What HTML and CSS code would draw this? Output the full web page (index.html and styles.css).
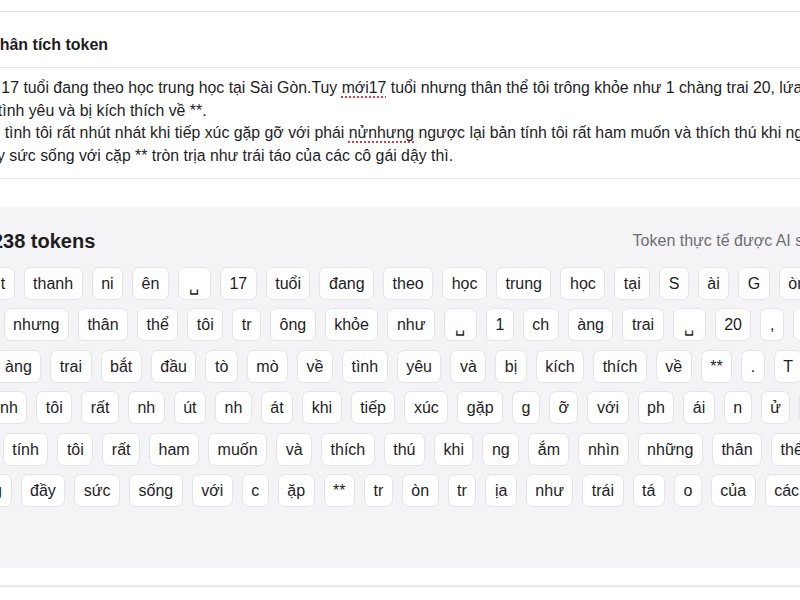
FILE: index.html
```html
<!DOCTYPE html>
<html lang="vi">
<head>
  <meta charset="UTF-8">
  <title>Phân tích token</title>
  <meta name="viewport" content="width=device-width, initial-scale=1.0">
  <link rel="stylesheet" href="styles.css">
</head>
<body>

<main class="page">
  <section class="card">
    <header class="card-head">
      <h2>Phân tích token</h2>
    </header>
    <div class="source">
      <p>Tôi là một thanh niên 17 tuổi đang theo học trung học tại Sài Gòn.Tuy <span class="typo">mới17</span> tuổi nhưng thân thể tôi trông khỏe như 1 chàng trai 20, lứa tuổi trẻ chàng<br>trai bắt đầu tò mò về tình yêu và bị kích thích về **.</p>
      <p>Thật ra ngoài đời bản tình tôi rất nhút nhát khi tiếp xúc gặp gỡ với phái <span class="typo">nửnhưng</span> ngược lại bản tính tôi rất ham muốn và thích thú khi ngắm nhìn những<br>thân thể tuổi căng đầy sức sống với cặp ** tròn trịa như trái táo của các cô gái dậy thì.</p>
    </div>
  </section>

  <section class="panel">
    <div class="panel-head">
      <h3>Tổng cộng: 238 tokens</h3>
      <span class="hint">Token thực tế được AI sử dụng</span>
    </div>

    <div class="tokens">
      <div class="row">
        <span class="tok">à</span><span class="tok">m</span><span class="tok">ộ</span><span class="tok">t</span><span class="tok">thanh</span><span class="tok">ni</span><span class="tok">ên</span><span class="tok sp">␣</span><span class="tok">17</span><span class="tok">tuổi</span><span class="tok">đang</span><span class="tok">theo</span><span class="tok">học</span><span class="tok">trung</span><span class="tok">học</span><span class="tok">tại</span><span class="tok">S</span><span class="tok">ài</span><span class="tok">G</span><span class="tok">òn</span><span class="tok">.</span><span class="tok">T</span><span class="tok">uy</span><span class="tok">m</span><span class="tok">ới</span>
      </div>
      <div class="row">
        <span class="tok">1</span><span class="tok">7</span><span class="tok">tuổi</span><span class="tok">nhưng</span><span class="tok">thân</span><span class="tok">thể</span><span class="tok">tôi</span><span class="tok">tr</span><span class="tok">ông</span><span class="tok">khỏe</span><span class="tok">như</span><span class="tok sp">␣</span><span class="tok">1</span><span class="tok">ch</span><span class="tok">àng</span><span class="tok">trai</span><span class="tok sp">␣</span><span class="tok">20</span><span class="tok">,</span><span class="tok">lứa</span><span class="tok">tuổi</span>
      </div>
      <div class="row">
        <span class="tok">tr</span><span class="tok">ẻ</span><span class="tok">ch</span><span class="tok">àng</span><span class="tok">trai</span><span class="tok">bắt</span><span class="tok">đầu</span><span class="tok">tò</span><span class="tok">mò</span><span class="tok">về</span><span class="tok">tình</span><span class="tok">yêu</span><span class="tok">và</span><span class="tok">bị</span><span class="tok">kích</span><span class="tok">thích</span><span class="tok">về</span><span class="tok">**</span><span class="tok">.</span><span class="tok">T</span><span class="tok">hật</span><span class="tok">ra</span><span class="tok">ngoài</span>
      </div>
      <div class="row">
        <span class="tok">đời</span><span class="tok">bản</span><span class="tok">tình</span><span class="tok">tôi</span><span class="tok">rất</span><span class="tok">nh</span><span class="tok">út</span><span class="tok">nh</span><span class="tok">át</span><span class="tok">khi</span><span class="tok">tiếp</span><span class="tok">xúc</span><span class="tok">gặp</span><span class="tok">g</span><span class="tok">ỡ</span><span class="tok">với</span><span class="tok">ph</span><span class="tok">ái</span><span class="tok">n</span><span class="tok">ử</span><span class="tok">nhưng</span><span class="tok">ngược</span>
      </div>
      <div class="row">
        <span class="tok">l</span><span class="tok">ại</span><span class="tok">bản</span><span class="tok">tính</span><span class="tok">tôi</span><span class="tok">rất</span><span class="tok">ham</span><span class="tok">muốn</span><span class="tok">và</span><span class="tok">thích</span><span class="tok">thú</span><span class="tok">khi</span><span class="tok">ng</span><span class="tok">ắm</span><span class="tok">nhìn</span><span class="tok">những</span><span class="tok">thân</span><span class="tok">thể</span>
      </div>
      <div class="row">
        <span class="tok">tu</span><span class="tok">ổi</span><span class="tok">căng</span><span class="tok">đầy</span><span class="tok">sức</span><span class="tok">sống</span><span class="tok">với</span><span class="tok">c</span><span class="tok">ặp</span><span class="tok">**</span><span class="tok">tr</span><span class="tok">òn</span><span class="tok">tr</span><span class="tok">ịa</span><span class="tok">như</span><span class="tok">trái</span><span class="tok">tá</span><span class="tok">o</span><span class="tok">của</span><span class="tok">các</span><span class="tok">cô</span><span class="tok">gái</span><span class="tok">dậy</span><span class="tok">thì</span><span class="tok">.</span>
      </div>
    </div>
  </section>

  <section class="next"></section>
</main>

</body>
</html>
```

FILE: styles.css
```css
* {
  box-sizing: border-box;
}

body {
  margin: 0;
  overflow: hidden;
  background: #fff;
  color: #1d1d1f;
  font-family: "Liberation Sans", Arial, sans-serif;
}

.page {
  width: 1070px;
  margin-left: -170px;
  padding-top: 11px;
}

.card {
  border-top: 1px solid #e4e4e6;
  border-bottom: 1px solid #e6e6e8;
}

.card-head {
  padding: 22px 0 12px 159px;
  border-bottom: 1px solid #e6e6e8;
}

.card-head h2 {
  margin: 0;
  font-size: 16px;
  line-height: 21px;
  font-weight: 700;
}

.source {
  padding: 9.3px 0 10.7px 19px;
  font-size: 15.85px;
  line-height: 22.5px;
  white-space: nowrap;
}

.source p {
  margin: 0;
}

.typo {
  text-decoration: underline dotted #dc3b42;
  text-decoration-thickness: 1.5px;
  text-underline-offset: 3px;
}

.panel {
  margin-top: 28px;
  background: #f4f4f6;
  padding: 22px 46px 60.5px;
}

.panel-head {
  display: flex;
  justify-content: space-between;
  align-items: center;
  height: 24px;
  margin-bottom: 14px;
  padding-left: 1.5px;
}

.panel-head h3 {
  margin: 0;
  font-size: 20px;
  line-height: 24px;
  font-weight: 700;
}

.hint {
  font-size: 16px;
  line-height: 24px;
  color: #6e6e73;
}

.tokens {
  display: flex;
  flex-direction: column;
  gap: 8.5px;
}

.row {
  display: flex;
  gap: 9px;
}

.tok {
  flex: none;
  height: 33px;
  padding: 0 8.5px;
  border: 1px solid #e4e4e7;
  border-radius: 7px;
  background: #fff;
  font-size: 16px;
  line-height: 31px;
  white-space: pre;
}

.tok.sp {
  width: 33px;
  padding: 0;
  line-height: 35px;
  text-align: center;
}

.next {
  margin-top: 18px;
  height: 40px;
  border-top: 1px solid #e2e2e4;
  box-shadow: 0 -1px 1px #f1f1f2;
}
```
